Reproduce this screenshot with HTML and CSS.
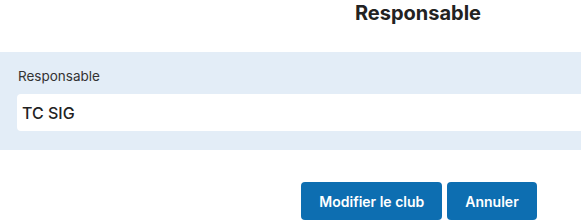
FILE: index.html
```html
<!DOCTYPE html>
<html lang="fr">

<head>
     <meta charset="UTF-8">
     <meta name="viewport" content="width=device-width, initial-scale=1.0">
     <title>Modifier le club</title>
     <link rel="stylesheet" href="styles.css">
</head>

<body>
     <div class="viewport">
          <div class="page">
               <h2 class="section-title">Responsable</h2>

               <!-- bloc responsable -->
               <div class="form-band">
                    <label class="field-label" for="responsable">Responsable</label>
                    <input class="field-input" id="responsable" type="text" value="TC SIG">
               </div>

               <div class="form-actions">
                    <button class="btn">Modifier le club</button>
                    <button class="btn">Annuler</button>
               </div>
          </div>
     </div>
</body>

</html>
```

FILE: styles.css
```css
* {
     padding: 0;
     margin: 0;
     box-sizing: border-box;
     font-family: 'Inter', 'Noto Sans', sans-serif;
}

body {
     background: #fff;
     color: #222;
}

.viewport {
     width: 100%;
     overflow: hidden;
}

.page {
     width: 836px;
}

.section-title {
     text-align: center;
     font-size: 20px;
     font-weight: 700;
     line-height: 24px;
     padding-top: 1px;
     color: #222;
}

.form-band {
     margin-top: 27px;
     background: #e3edf7;
     padding: 15px 0 19px 17px;
     display: flex;
     flex-direction: column;
}

.field-label {
     font-size: 13.5px;
     color: #333;
     line-height: 18px;
     padding-left: 1px;
}

.field-input {
     margin-top: 9px;
     height: 37px;
     border: none;
     outline: none;
     border-radius: 4px;
     background: #fff;
     padding: 0 5px;
     font-size: 16px;
     font-weight: 500;
     color: #222;
}

.form-actions {
     display: flex;
     justify-content: center;
     gap: 5px;
     margin-top: 32px;
     padding-left: 2px;
}

.btn {
     height: 38px;
     padding: 0 18px;
     background: #0d6eb1;
     color: #fff;
     font-size: 14px;
     font-weight: 600;
     border: none;
     border-radius: 4px;
     cursor: pointer;
}
```
